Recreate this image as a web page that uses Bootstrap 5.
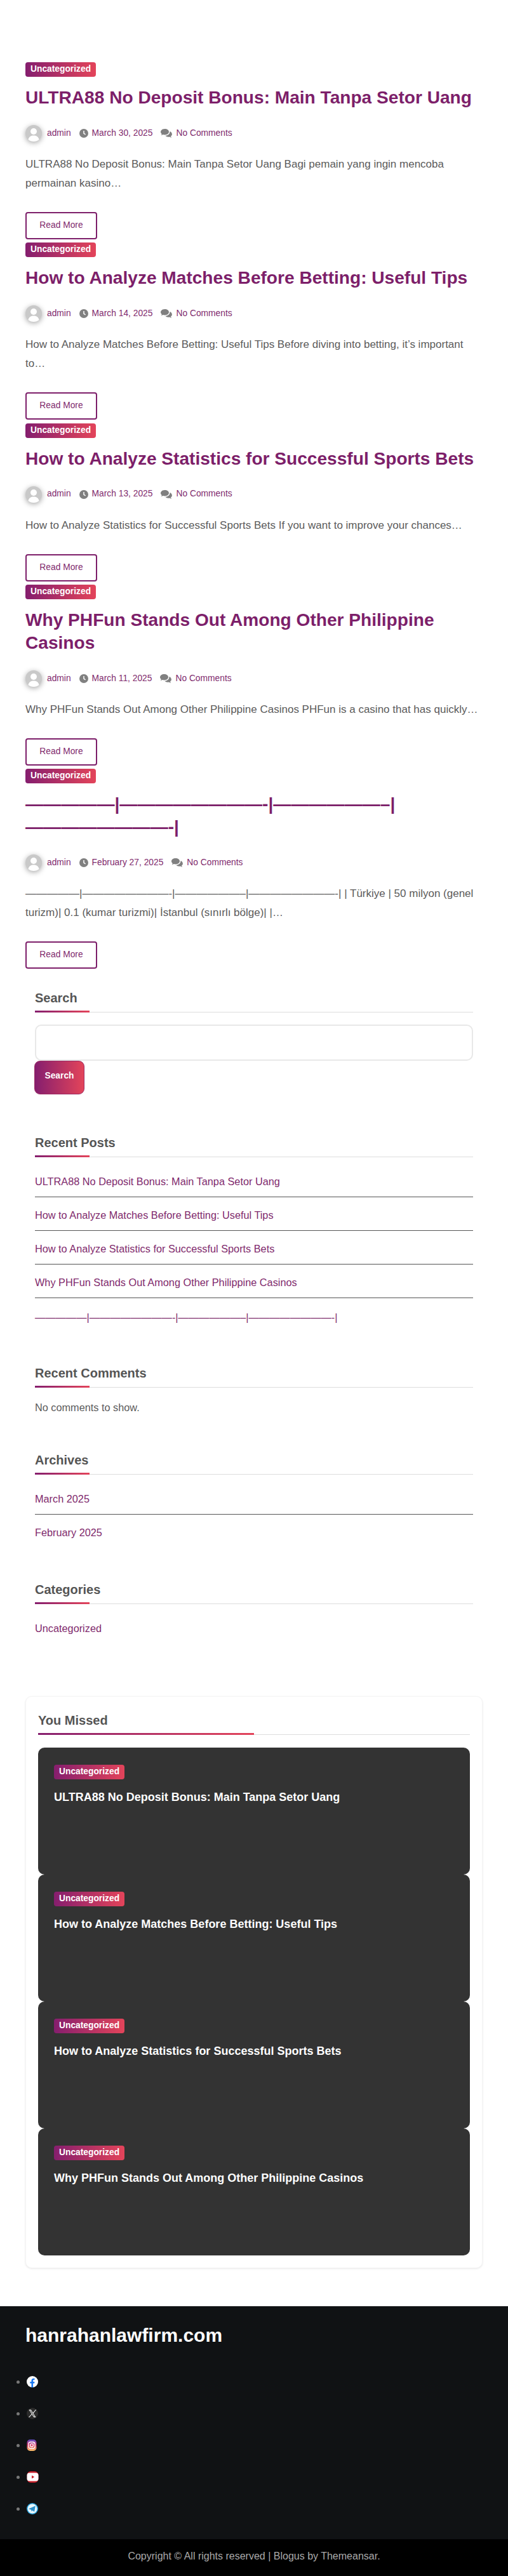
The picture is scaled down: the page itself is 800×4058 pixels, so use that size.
<!DOCTYPE html>
<html lang="en">
<head>
  <meta charset="UTF-8" />
  <meta name="viewport" content="width=device-width, initial-scale=1.0"/>
  <title>hanrahanlawfirm.com</title>
  <link href="https://cdn.jsdelivr.net/npm/bootstrap@5.3.0/dist/css/bootstrap.min.css" rel="stylesheet"/>
  <style>
    body { font-family: "Liberation Sans", Arial, sans-serif; color: #5b5b5b; background: #fff; font-size: 16px; }
    a { color: #7f2a6d; text-decoration: none; }

    .page-wrap { padding: 98px 40px 0; }
    .post-item { margin-bottom: 5.3px; }
    .cat-tag { display: inline-block; height: 23px; padding: 0 8px; line-height: 21px; font-size: 13.8px; font-weight: 700; color: #fff; border-radius: 4px; background: linear-gradient(90deg, #851e6e, #e3445a); vertical-align: top; }
    .post-title { font-size: 28.1px; line-height: 36px; font-weight: 700; margin: 14px 0 25px; }
    .post-title a { color: #7d1f6a; }
    .post-meta { height: 26px; font-size: 13.8px; }
    .post-meta svg { flex: none; }
    .avatar-pic { filter: drop-shadow(0 2px 4px rgba(0,0,0,.35)); margin-right: 8px; }
    .meta-ico { margin: 0 6px 0 13px; }
    .post-text { font-size: 17px; line-height: 30px; margin: 21px 0 30px; }
    .read-btn { display: block; width: 113px; height: 43px; padding: 8px 0 0; font-size: 13.8px; line-height: 21px; color: #7f2a6d; background: #fff; border: 2px solid #7d1f6a; border-radius: 4px; }

    .side-col { padding: 0 15px; margin-top: 33.5px; }
    .side-block { margin-bottom: 64px; }
    .side-block.gap-comments { margin-bottom: 59px; }
    .side-block.gap-archives { margin-bottom: 54px; }
    .side-block.gap-last { margin-bottom: 83px; }
    .side-title { font-size: 20px; line-height: 24px; font-weight: 700; color: #555; padding-bottom: 10px; margin: 0; border-bottom: 1px solid #ddd; position: relative; }
    .side-title::after { content: ""; position: absolute; left: 0; bottom: -1px; width: 86px; height: 3px; background: linear-gradient(90deg, #851e6e, #e3445a); }
    .search-box { height: 57px; margin-top: 19px; border: 2px solid #e8e8e8; border-radius: 10px; }
    .search-btn { display: block; width: 79px; height: 53px; margin-left: -1px; padding: 0 0 3px; font-size: 13.8px; font-weight: 700; color: #fff; border: 1px solid #9c2a62; border-radius: 9px; background: linear-gradient(90deg, #851e6e, #e3445a); }
    .side-list { margin: 10px 0 0; padding: 0; list-style: none; font-size: 16.3px; }
    .side-list li { padding: 16px 0 12px; line-height: 24px; border-bottom: 1px solid #555; }
    .side-list li:last-child { border-bottom: 0; }
    .side-list.with-rule li:last-child { border-bottom: 1px solid #555; }
    .side-dash { margin-top: 18px; line-height: 24px; font-size: 16.3px; }
    .side-note { margin: 19px 0 0; line-height: 24px; font-size: 16.3px; }

    .missed-box { margin: 0 0 60px; padding: 25px 19px 19px; background: #fff; border: 1px solid #f5f5f5; border-radius: 10px; box-shadow: 0 1px 3px rgba(0,0,0,.1); }
    .missed-title { font-size: 20px; line-height: 24px; font-weight: 700; color: #555; padding-bottom: 10px; margin: 0 0 20px; border-bottom: 1px solid #ddd; position: relative; }
    .missed-title::after { content: ""; position: absolute; left: 0; bottom: -1px; width: 50%; height: 3px; background: linear-gradient(90deg, #851e6e, #e3445a); }
    .missed-item { height: 200px; padding: 27px 25px; background: #333; border-radius: 10px; }
    .missed-name { font-size: 18px; line-height: 24px; font-weight: 700; color: #fff; margin: 15px 0 0; }

    .foot-top { height: 367px; padding: 26px 0 0; background: #101214; }
    .foot-brand { padding-left: 40px; font-size: 30px; line-height: 40px; font-weight: 700; color: #fff; margin: 0 0 28px; }
    .foot-social { margin: 0; padding: 0 0 0 42px; color: #777; }
    .foot-social li { height: 50px; padding-top: 15px; line-height: 20px; }
    .foot-social svg { vertical-align: top; }
    .foot-copy { height: 58px; background: #000; color: #aaa; line-height: 54px; text-align: center; }
  </style>
</head>
<body>

<svg width="0" height="0" class="d-none">
  <symbol id="ic-avatar" viewBox="0 0 26 26">
    <circle cx="13" cy="13" r="13" fill="#c9c9c9"/>
    <circle cx="13" cy="10" r="5" fill="#fff"/>
    <path d="M4.5 23c1-5 4.500-6.500 8.500-6.500s7.500 1.500 8.500 6.500c-2.300 2-5.300 3-8.500 3s-6.200-1-8.500-3z" fill="#fff"/>
  </symbol>
  <symbol id="ic-clock" viewBox="0 0 14 14">
    <circle cx="7" cy="7" r="7" fill="#808080"/>
    <path d="M7 3v4.200l2.600 1.600" fill="none" stroke="#fff" stroke-width="1.500"/>
  </symbol>
  <symbol id="ic-comments" viewBox="0 0 18 14">
    <path d="M6.500 0C2.900 0 0 2.100 0 4.700c0 1.300.7 2.500 1.900 3.400L.8 10.200l3-1.200c.8.300 1.700.4 2.700.4 3.600 0 6.500-2.100 6.500-4.700S10.100 0 6.500 0z" fill="#808080"/>
    <path d="M14.300 4.200c.1.300.1.600.1.900 0 3-3 5.500-7 5.700 1 1.200 2.900 2 4.900 2 .6 0 1.200-.1 1.700-.2l2.900 1.300-.9-2.300c1.200-.8 1.900-2 1.900-3.200 0-1.800-1.100-3.300-2.600-4.200z" fill="#808080"/>
  </symbol>
</svg>

<div class="page-wrap">

  <article class="post-item">
    <a class="cat-tag" href="#">Uncategorized</a>
    <h2 class="post-title"><a href="#">ULTRA88 No Deposit Bonus: Main Tanpa Setor Uang</a></h2>
    <div class="post-meta d-flex align-items-center">
      <svg class="avatar-pic" width="26" height="26"><use href="#ic-avatar"/></svg>
      <a href="#">admin</a>
      <svg class="meta-ico" width="14" height="14"><use href="#ic-clock"/></svg>
      <a href="#">March 30, 2025</a>
      <svg class="meta-ico" width="18" height="14"><use href="#ic-comments"/></svg>
      <a href="#">No Comments</a>
    </div>
    <p class="post-text">ULTRA88 No Deposit Bonus: Main Tanpa Setor Uang Bagi pemain yang ingin mencoba permainan kasino&hellip;</p>
    <a class="btn read-btn" href="#">Read More</a>
  </article>

  <article class="post-item">
    <a class="cat-tag" href="#">Uncategorized</a>
    <h2 class="post-title"><a href="#">How to Analyze Matches Before Betting: Useful Tips</a></h2>
    <div class="post-meta d-flex align-items-center">
      <svg class="avatar-pic" width="26" height="26"><use href="#ic-avatar"/></svg>
      <a href="#">admin</a>
      <svg class="meta-ico" width="14" height="14"><use href="#ic-clock"/></svg>
      <a href="#">March 14, 2025</a>
      <svg class="meta-ico" width="18" height="14"><use href="#ic-comments"/></svg>
      <a href="#">No Comments</a>
    </div>
    <p class="post-text">How to Analyze Matches Before Betting: Useful Tips Before diving into betting, it&rsquo;s important to&hellip;</p>
    <a class="btn read-btn" href="#">Read More</a>
  </article>

  <article class="post-item">
    <a class="cat-tag" href="#">Uncategorized</a>
    <h2 class="post-title"><a href="#">How to Analyze Statistics for Successful Sports Bets</a></h2>
    <div class="post-meta d-flex align-items-center">
      <svg class="avatar-pic" width="26" height="26"><use href="#ic-avatar"/></svg>
      <a href="#">admin</a>
      <svg class="meta-ico" width="14" height="14"><use href="#ic-clock"/></svg>
      <a href="#">March 13, 2025</a>
      <svg class="meta-ico" width="18" height="14"><use href="#ic-comments"/></svg>
      <a href="#">No Comments</a>
    </div>
    <p class="post-text">How to Analyze Statistics for Successful Sports Bets If you want to improve your chances&hellip;</p>
    <a class="btn read-btn" href="#">Read More</a>
  </article>

  <article class="post-item">
    <a class="cat-tag" href="#">Uncategorized</a>
    <h2 class="post-title"><a href="#">Why PHFun Stands Out Among Other Philippine Casinos</a></h2>
    <div class="post-meta d-flex align-items-center">
      <svg class="avatar-pic" width="26" height="26"><use href="#ic-avatar"/></svg>
      <a href="#">admin</a>
      <svg class="meta-ico" width="14" height="14"><use href="#ic-clock"/></svg>
      <a href="#">March 11, 2025</a>
      <svg class="meta-ico" width="18" height="14"><use href="#ic-comments"/></svg>
      <a href="#">No Comments</a>
    </div>
    <p class="post-text">Why PHFun Stands Out Among Other Philippine Casinos PHFun is a casino that has quickly&hellip;</p>
    <a class="btn read-btn" href="#">Read More</a>
  </article>

  <article class="post-item">
    <a class="cat-tag" href="#">Uncategorized</a>
    <h2 class="post-title"><a href="#">—————|————————-|——————–|————————-|</a></h2>
    <div class="post-meta d-flex align-items-center">
      <svg class="avatar-pic" width="26" height="26"><use href="#ic-avatar"/></svg>
      <a href="#">admin</a>
      <svg class="meta-ico" width="14" height="14"><use href="#ic-clock"/></svg>
      <a href="#">February 27, 2025</a>
      <svg class="meta-ico" width="18" height="14"><use href="#ic-comments"/></svg>
      <a href="#">No Comments</a>
    </div>
    <p class="post-text">—————|————————-|——————–|————————-| | Türkiye | 50 milyon (genel turizm)| 0.1 (kumar turizmi)| İstanbul (sınırlı bölge)| |&hellip;</p>
    <a class="btn read-btn" href="#">Read More</a>
  </article>

  <aside class="side-col">
    <section class="side-block">
      <h2 class="side-title">Search</h2>
      <form>
        <input class="form-control search-box" type="search" aria-label="Search">
        <button class="btn search-btn" type="button">Search</button>
      </form>
    </section>

    <section class="side-block">
      <h2 class="side-title">Recent Posts</h2>
      <ul class="side-list with-rule">
        <li><a href="#">ULTRA88 No Deposit Bonus: Main Tanpa Setor Uang</a></li>
        <li><a href="#">How to Analyze Matches Before Betting: Useful Tips</a></li>
        <li><a href="#">How to Analyze Statistics for Successful Sports Bets</a></li>
        <li><a href="#">Why PHFun Stands Out Among Other Philippine Casinos</a></li>
      </ul>
      <div class="side-dash"><a href="#">—————|————————-|——————–|————————-|</a></div>
    </section>

    <section class="side-block gap-comments">
      <h2 class="side-title">Recent Comments</h2>
      <p class="side-note">No comments to show.</p>
    </section>

    <section class="side-block gap-archives">
      <h2 class="side-title">Archives</h2>
      <ul class="side-list">
        <li><a href="#">March 2025</a></li>
        <li><a href="#">February 2025</a></li>
      </ul>
    </section>

    <section class="side-block gap-last">
      <h2 class="side-title">Categories</h2>
      <ul class="side-list">
        <li><a href="#">Uncategorized</a></li>
      </ul>
    </section>
  </aside>

  <section class="missed-box">
    <h2 class="missed-title">You Missed</h2>
    <div class="missed-item">
      <a class="cat-tag" href="#">Uncategorized</a>
      <h3 class="missed-name">ULTRA88 No Deposit Bonus: Main Tanpa Setor Uang</h3>
    </div>
    <div class="missed-item">
      <a class="cat-tag" href="#">Uncategorized</a>
      <h3 class="missed-name">How to Analyze Matches Before Betting: Useful Tips</h3>
    </div>
    <div class="missed-item">
      <a class="cat-tag" href="#">Uncategorized</a>
      <h3 class="missed-name">How to Analyze Statistics for Successful Sports Bets</h3>
    </div>
    <div class="missed-item">
      <a class="cat-tag" href="#">Uncategorized</a>
      <h3 class="missed-name">Why PHFun Stands Out Among Other Philippine Casinos</h3>
    </div>
  </section>
</div>

<footer>
  <div class="foot-top">
    <h2 class="foot-brand">hanrahanlawfirm.com</h2>
    <ul class="foot-social">
      <li>
        <svg width="18" height="20" viewBox="0 0 18 20">
          <circle cx="9" cy="10" r="9" fill="#fff"/>
          <path d="M7.500 19v-6.500H5.300V10h2.200V8.200c0-2.300 1.300-3.500 3.300-3.500.8 0 1.700.1 1.700.1v2.100h-1c-1.100 0-1.400.7-1.400 1.300V10h2.400l-.4 2.500h-2v6.500z" fill="#1877f2"/>
        </svg>
      </li>
      <li>
        <svg width="18" height="20" viewBox="0 0 18 20">
          <circle cx="9" cy="10" r="9" fill="#2b2b2b"/>
          <path d="M3.500 4h3.300l7.700 12h-3.300zM5.200 5l6.500 10h1.100L6.300 5z" fill="#fff"/>
          <path d="M14 4l-4.300 5 .6.900L15.200 4zM7.800 10.700L3 16h1.200l4.200-4.500z" fill="#fff"/>
        </svg>
      </li>
      <li>
        <svg width="16" height="20" viewBox="0 0 16 20">
          <defs>
            <linearGradient id="ig-grad" x1="0" y1="0" x2="0" y2="1">
              <stop offset="0" stop-color="#5b4fc9"/>
              <stop offset=".45" stop-color="#d6336c"/>
              <stop offset="1" stop-color="#fdc468"/>
            </linearGradient>
          </defs>
          <rect x="0.500" y="1" width="15" height="18" rx="5" fill="url(#ig-grad)"/>
          <rect x="3" y="5" width="10" height="10" rx="3" fill="none" stroke="#fff" stroke-width="1.300"/>
          <circle cx="8" cy="10" r="2.400" fill="none" stroke="#fff" stroke-width="1.300"/>
          <circle cx="11" cy="7" r=".7" fill="#fff"/>
        </svg>
      </li>
      <li>
        <svg width="19" height="20" viewBox="0 0 19 20">
          <rect x="0.500" y="1" width="18" height="18" rx="6" fill="#c8202c"/>
          <rect x="0.500" y="3.500" width="18" height="13" rx="4" fill="#fff"/>
          <path d="M8 7.500l4.200 2.500L8 12.500z" fill="#c8202c"/>
        </svg>
      </li>
      <li>
        <svg width="18" height="20" viewBox="0 0 18 20">
          <circle cx="9" cy="10" r="9" fill="#2aa4e0"/>
          <circle cx="9" cy="10" r="7.500" fill="#e6f6fd"/>
          <path d="M3 10.200l10.800-4.700-1.700 9.300-3-2.100-1.500 1.500-.4-2.500z" fill="#2a8fcb"/>
        </svg>
      </li>
    </ul>
  </div>
  <div class="foot-copy">Copyright &copy; All rights reserved | Blogus by Themeansar.</div>
</footer>

</body>
</html>
